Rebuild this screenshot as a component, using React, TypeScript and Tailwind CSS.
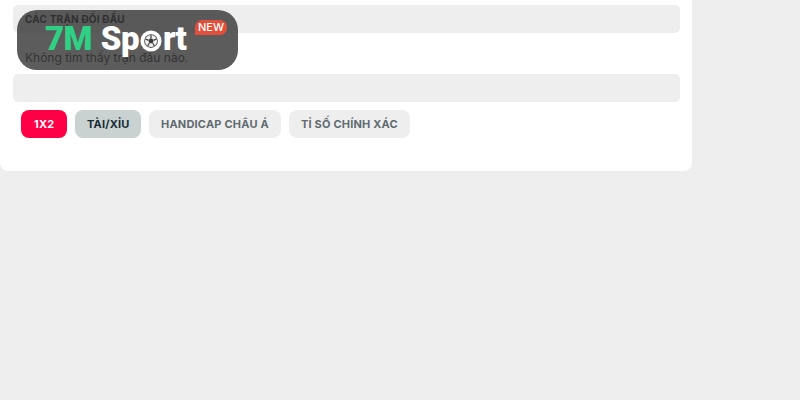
import React from 'react';

const tabs = [
  { label: '1X2', cls: 'bg-[#ff0046] text-white px-[13px]' },
  { label: 'TÀI/XỈU', cls: 'bg-[#c9d1d1] text-[#172b33] px-[11.5px]' },
  { label: 'HANDICAP CHÂU Á', cls: 'bg-[#eeeeee] text-[#5f6b70] px-[12px]' },
  { label: 'TỈ SỐ CHÍNH XÁC', cls: 'bg-[#eeeeee] text-[#5f6b70] px-[12px]' },
];

const Ball = () => (
  <svg width="22" height="22" viewBox="0 0 24 24" className="mx-[1px] mt-[4px]">
    <circle cx="12" cy="12" r="11.5" fill="#fff" />
    <circle cx="12" cy="12" r="7.5" fill="#4a4a4a" />
    <circle cx="12" cy="12" r="6.6" fill="#efefef" />
    <polygon points="12,8.8 15,11 13.9,14.4 10.1,14.4 9,11" fill="#3a3a3a" />
    <path d="M12 5.5v3.3M6 10l3 1M18 10l-3 1M8.3 17.5l1.8-3.1M15.7 17.5l-1.8-3.1" stroke="#3a3a3a" strokeWidth="1.3" />
  </svg>
);

const Logo = () => (
  <div className="absolute left-[17px] top-[10px] flex h-[60px] w-[221px] items-center rounded-[20px] bg-[#333333]/80 pb-[3px] pl-[28px] font-['Roboto',sans-serif]">
    <div className="flex items-center text-[33px] leading-none font-black tracking-[-0.6px]">
      <span className="mr-[9px] text-[#2fd084]">7M</span>
      <span className="text-white">Sp</span>
      <Ball />
      <span className="text-white">rt</span>
    </div>
    <span className="absolute left-[178px] top-[10px] rounded-[7px] rounded-bl-none bg-[#e2503c] px-[3px] font-['Inter',sans-serif] text-[11px] leading-[15px] font-medium text-white">
      NEW
    </span>
  </div>
);

export default function App() {
  return (
    <div className="relative min-h-[400px] bg-[#eeeeee] font-['Inter',sans-serif]">
      <div className="h-[171px] w-[692px] rounded-b-[8px] bg-white pt-[5px] pr-[12px] pl-[13px]">
        <div className="flex h-[28px] items-center rounded-[5px] bg-[#eeeeee] px-[12px]">
          <span className="text-[10px] font-bold tracking-[0.2px] text-[#222222]">CÁC TRẬN ĐỐI ĐẦU</span>
        </div>
        <p className="mt-[17px] h-[24px] px-[12px] text-[12px] leading-[16px] text-[#333333]">Không tìm thấy trận đấu nào.</p>
        <div className="h-[28px] rounded-[5px] bg-[#eeeeee]" />
        <div className="mt-[8px] flex gap-[8px] px-[8px]">
          {tabs.map((t) => (
            <div key={t.label} className={`flex h-[28px] items-center rounded-[8px] text-[11px] font-bold tracking-[0.2px] ${t.cls}`}>
              {t.label}
            </div>
          ))}
        </div>
      </div>
      <Logo />
    </div>
  );
}
